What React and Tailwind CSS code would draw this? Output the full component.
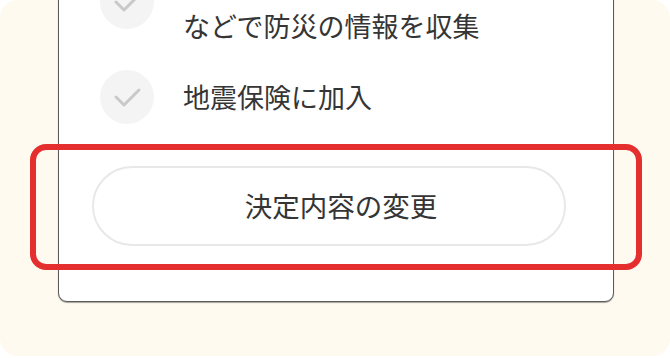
function Check() {
  return (
    <span className="flex h-[54px] w-[54px] shrink-0 items-center justify-center rounded-full bg-[#f4f4f4]">
      <svg width="54" height="54" viewBox="0 0 54 54" fill="none">
        <polyline
          points="16,27 24,35 39,20"
          stroke="#c9c9c9"
          strokeWidth="3"
          strokeLinecap="round"
          strokeLinejoin="round"
        />
      </svg>
    </span>
  );
}

const items = [
  ["自治体のホームページ", "などで防災の情報を収集"],
  ["地震保険に加入"],
];

export default function App() {
  return (
    <div className="h-[358px] w-[670px] overflow-hidden bg-white font-['Noto_Sans_CJK_JP',sans-serif] text-[#353535]">
      <div className="relative h-[356px] overflow-hidden rounded-[18px] bg-[#fffaef]">
        <div className="-mt-[47px] ml-[58px] w-[556px] rounded-b-[9px] border border-[#5a5a5a] bg-white pb-[55px] shadow-[0_1px_1px_rgba(0,0,0,0.35)]">
          <ul className="flex flex-col gap-[20px] pl-[41px]">
            {items.map((lines) => (
              <li key={lines[0]} className="flex items-center gap-[29px]">
                <Check />
                <p className="text-[27px] leading-[48px]">
                  {lines.map((l) => (
                    <span key={l} className="block">
                      {l}
                    </span>
                  ))}
                </p>
              </li>
            ))}
          </ul>
          <button className="ml-[33px] mt-[42px] flex h-[80px] w-[474px] items-center justify-center rounded-full border-2 border-[#e8e8e8] bg-white pl-[24px] text-[27.5px] text-[#353535]">
            決定内容の変更
          </button>
        </div>
        <div className="pointer-events-none absolute left-[30px] top-[144px] h-[126px] w-[612px] rounded-[16px] border-[6px] border-[#e52f2f]" />
      </div>
    </div>
  );
}
